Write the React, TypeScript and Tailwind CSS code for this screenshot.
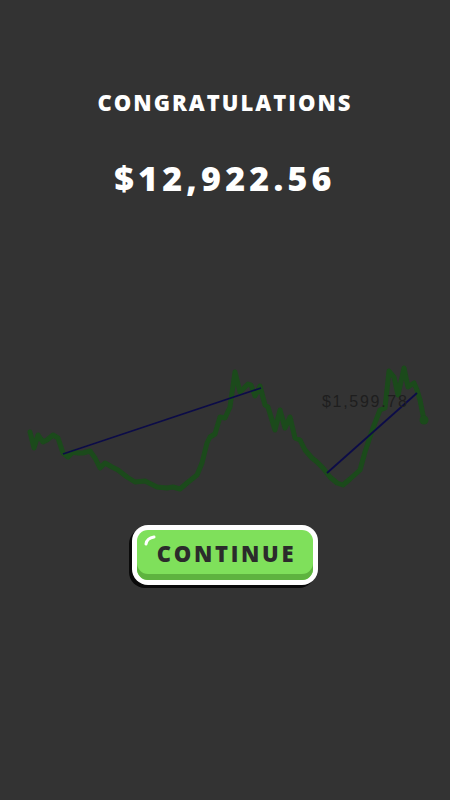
const chartPoints: [number, number][] = [
  [30, 432], [34, 448], [38, 435], [43, 442], [47, 440], [53, 435], [58, 438],
  [63, 453], [68, 457], [73, 452], [78, 453], [83, 453], [90, 451], [95, 458],
  [100, 468], [105, 463], [112, 467], [118, 470], [127, 477], [135, 482],
  [145, 481], [157, 487], [167, 488], [173, 487], [180, 489], [187, 483],
  [197, 475], [202, 463], [207, 443], [210, 437], [215, 434], [220, 417],
  [225, 418], [230, 407], [235, 372], [240, 392], [248, 384], [251, 385],
  [255, 396], [260, 386], [265, 405], [268, 407], [275, 430], [280, 410],
  [285, 428], [290, 417], [295, 438], [300, 440], [305, 450], [312, 458],
  [317, 462], [323, 468], [330, 477], [337, 483], [343, 485], [350, 479],
  [360, 470], [365, 452], [373, 428], [380, 410], [385, 408], [389, 371],
  [394, 377], [398, 395], [404, 368], [408, 387], [414, 383], [417, 390],
  [420, 400], [424, 420],
];

function PriceChart() {
  const d = chartPoints.map(([x, y], i) => `${i ? "L" : "M"}${x} ${y}`).join(" ");
  return (
    <svg width="450" height="145" viewBox="0 355 450 145" className="block">
      <path d={d} fill="none" stroke="#1b4a1b" strokeWidth="5" strokeLinejoin="round" strokeLinecap="round" />
      <circle cx="424" cy="420" r="4.5" fill="#1b4a1b" />
      <line x1="63" y1="454" x2="261" y2="388" stroke="#0c0c48" strokeWidth="1.8" />
      <line x1="327" y1="473" x2="417" y2="393" stroke="#0c0c48" strokeWidth="1.8" />
      <text
        x="322"
        y="407"
        fill="#1e1e1e"
        fontSize="16"
        letterSpacing="1.7"
        fontFamily="'Liberation Sans', Arial, sans-serif"
      >
        $1,599.78
      </text>
    </svg>
  );
}

function ContinueButton() {
  return (
    <div className="h-[60px] w-[186px] rounded-[16px] bg-white p-[5px] shadow-[-3px_3px_0_#0a0a0a]">
      <div className="relative flex h-full w-full items-center justify-center rounded-[11px] bg-[#7fe05b] shadow-[inset_0_-6px_0_#5eb33f]">
        <svg width="14" height="12" viewBox="0 0 14 12" className="absolute left-[6px] top-[4px]">
          <path d="M3 10 Q4 4 11 3" fill="none" stroke="#ffffff" strokeWidth="3" strokeLinecap="round" />
        </svg>
        <span className="pb-[3px] pl-[3px] font-['Open_Sans',sans-serif] text-[22px] font-extrabold tracking-[2.7px] text-[#2b2b2b]">
          CONTINUE
        </span>
      </div>
    </div>
  );
}

export default function App() {
  return (
    <div className="flex h-[800px] w-[450px] flex-col items-center bg-[#333333] font-['Open_Sans',sans-serif]">
      <h1 className="mt-[88px] text-[22px] font-extrabold leading-[28px] tracking-[2px] text-white">
        CONGRATULATIONS
      </h1>
      <div className="mt-[42px] text-[34px] font-extrabold leading-[40px] tracking-[4.2px] text-white">
        $12,922.56
      </div>
      <div className="mt-[157px]">
        <PriceChart />
      </div>
      <div className="mt-[25px]">
        <ContinueButton />
      </div>
    </div>
  );
}
